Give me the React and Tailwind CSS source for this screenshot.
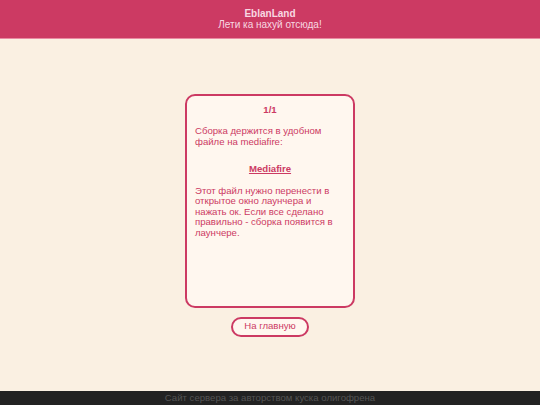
export default function App() {
    return (
        <div
            className="flex flex-col h-[405px] bg-[#faf0e2] text-[9.6px] leading-[10.5px]"
            style={{ fontFamily: '"Liberation Sans", Arial, sans-serif' }}
        >
            {/* Header */}
            <header className="h-[39px] bg-[#cc3a63] border-b border-[#e98aa2] flex flex-col items-center justify-center text-[10px] leading-[11.5px] text-[#f8d8e2]">
                <div className="font-bold">EblanLand</div>
                <div>Лети ка нахуй отсюда!</div>
            </header>

            {/* Content */}
            <main className="flex-1 flex flex-col items-center justify-center">
                <div className="w-[170px] h-[214px] border-2 border-[#cc3a63] rounded-[10px] bg-[#fff7ef] px-[8px] pt-[9px] text-[#cc3a63]">
                    <div className="font-bold text-center">1/1</div>
                    <p className="mt-[11px]">
                        Сборка держится в удобном файле на mediafire:
                    </p>
                    <div className="mt-[17px] text-center">
                        <a href="#" className="font-bold underline">
                            Mediafire
                        </a>
                    </div>
                    <p className="mt-[11px]">
                        Этот файл нужно перенести в открытое окно лаунчера и
                        нажать ок. Если все сделано правильно - сборка
                        появится в лаунчере.
                    </p>
                </div>
                <button className="mt-[9px] w-[78px] h-[20px] rounded-full border-2 border-[#cc3a63] text-[#cc3a63] bg-[#fff7ef]">
                    На главную
                </button>
            </main>

            {/* Footer */}
            <footer className="h-[14px] bg-[#222222] text-[#555555] flex items-center justify-center">
                Сайт сервера за авторством куска олигофрена
            </footer>
        </div>
    );
}
